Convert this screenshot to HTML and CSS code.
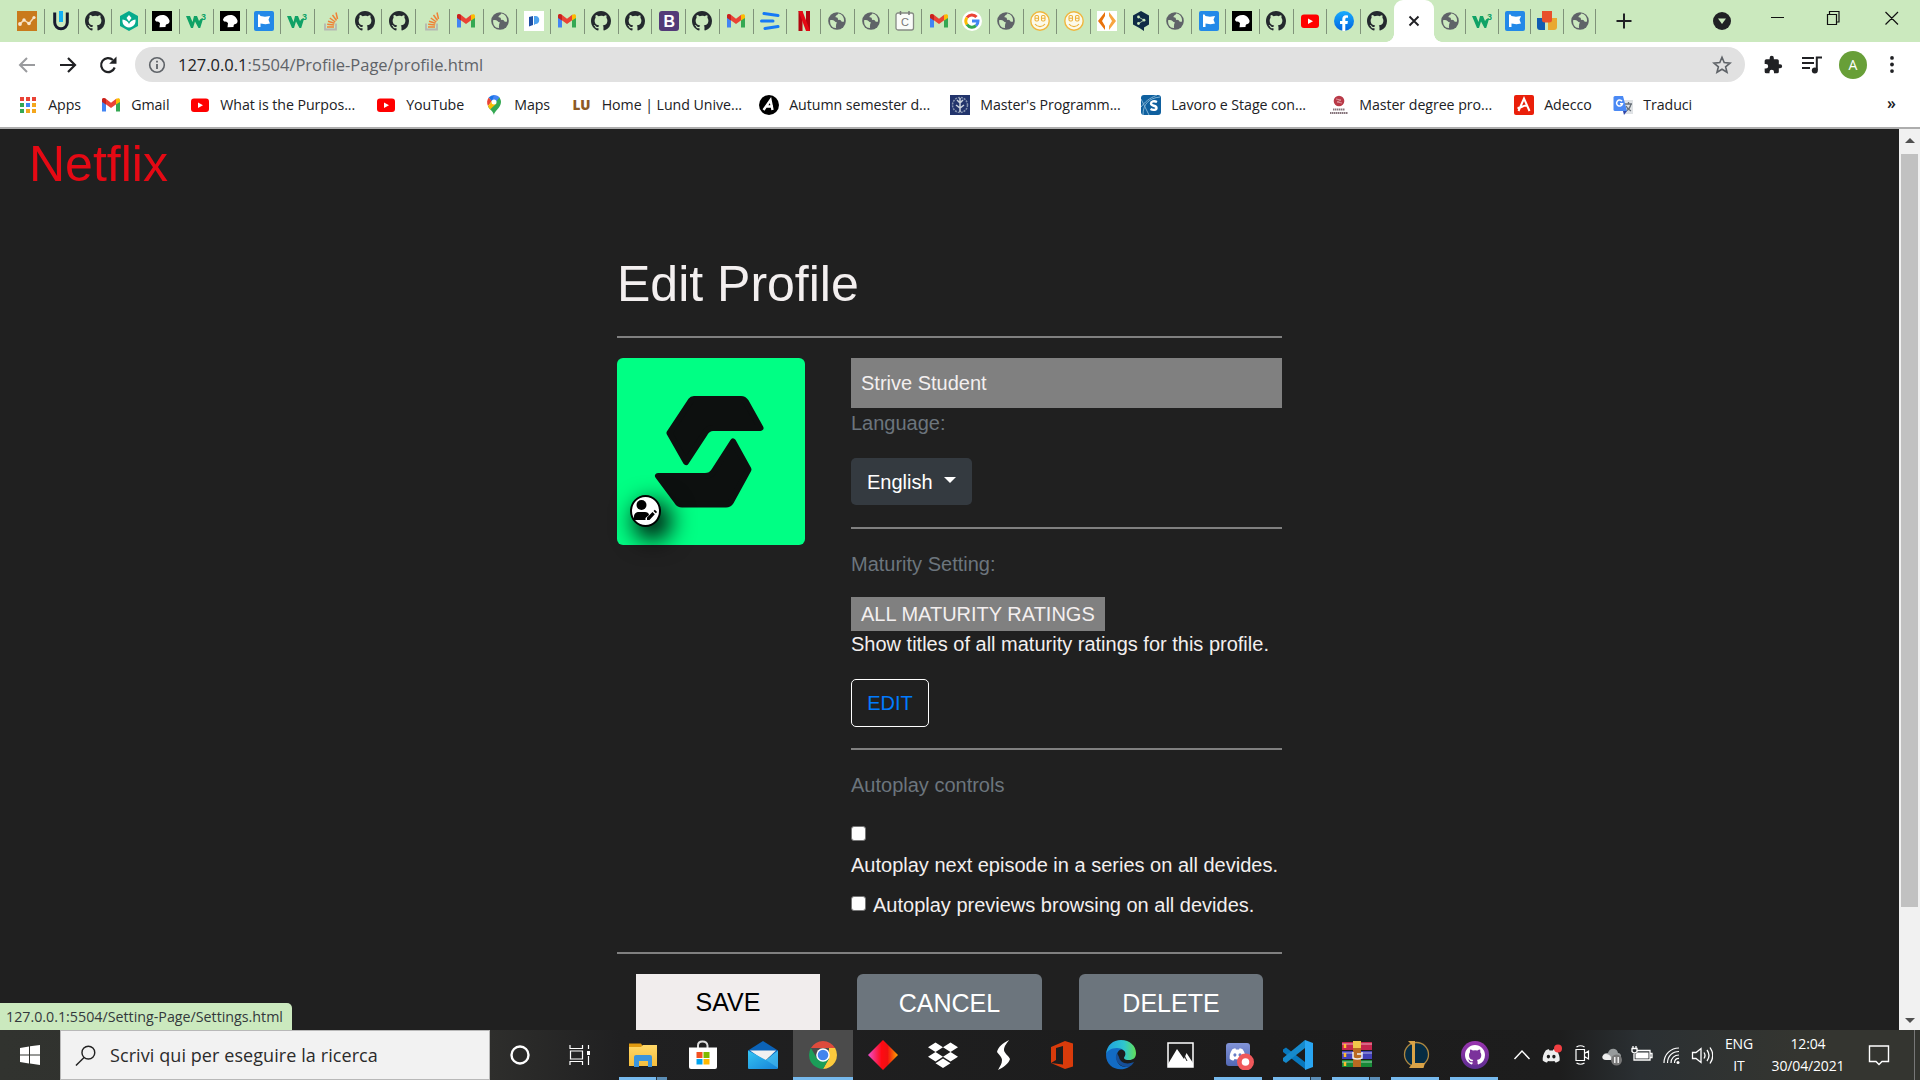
FILE: index.html
```html
<!DOCTYPE html>
<html lang="en">
<head>
<meta charset="utf-8">
<title>Edit Profile</title>
<link rel="stylesheet" href="styles.css">
</head>
<body>
<svg class="sprite" aria-hidden="true">
  <defs>
    <linearGradient id="g-fb" x2="0" y2="1"><stop stop-color="#18acfe"/><stop offset="1" stop-color="#0163e0"/></linearGradient>
    <linearGradient id="g-mail" x2="1" y2="1"><stop stop-color="#35c4f2"/><stop offset="1" stop-color="#1683d8"/></linearGradient>
    <linearGradient id="g-dia"><stop stop-color="#f04fd0"/><stop offset=".45" stop-color="#ff0a14"/><stop offset=".65" stop-color="#f01010"/><stop offset="1" stop-color="#ffa800"/></linearGradient>
    <linearGradient id="g-edge"><stop stop-color="#1f9ee0"/><stop offset=".6" stop-color="#2fc6cf"/><stop offset="1" stop-color="#62df58"/></linearGradient>
    <linearGradient id="g-folder" x2="0" y2="1"><stop stop-color="#ffd868"/><stop offset="1" stop-color="#f5bd3c"/></linearGradient>
    <linearGradient id="g-gh" x2="0" y2="1"><stop stop-color="#9a35b0"/><stop offset="1" stop-color="#5d2d91"/></linearGradient>
    <linearGradient id="g-disc" x2="0" y2="1"><stop stop-color="#8294d8"/><stop offset="1" stop-color="#5268b4"/></linearGradient>
  </defs>
  <symbol id="chart" viewBox="0 0 20 20"><path fill="#c97a1c" d="M0 0h20v20H0z"/><path d="M3 13l4-4 5 3.500 5-6" fill="none" stroke="#f6d9b4" stroke-width="1.500"/><g fill="#f6e6d0"><circle cx="3" cy="13" r="1.900"/><circle cx="7" cy="9" r="1.700"/><circle cx="12" cy="12.500" r="1.800"/><circle cx="17" cy="6.500" r="1.600"/></g></symbol>
  <symbol id="udacity" viewBox="0 0 20 20"><path d="M3.700 1.500v10a6.300 6.300 0 0 0 12.600 0v-10" fill="none" stroke="#171a2f" stroke-width="3"/><path d="M10 0v11" stroke="#12b0f5" stroke-width="4"/></symbol>
  <symbol id="github" viewBox="0 0 16 16"><path d="M8 0C3.580 0 0 3.580 0 8c0 3.540 2.290 6.530 5.470 7.590.4.070.55-.17.55-.38 0-.19-.01-.82-.01-1.490-2.010.37-2.530-.49-2.690-.94-.09-.23-.48-.94-.82-1.130-.28-.15-.68-.52-.01-.53.63-.01 1.080.58 1.230.82.72 1.210 1.870.87 2.330.66.07-.52.28-.87.51-1.070-1.780-.2-3.640-.89-3.640-3.950 0-.87.31-1.590.82-2.150-.08-.2-.36-1.020.08-2.120 0 0 .67-.21 2.200.82A7.700 7.700 0 0 1 8 3.870c.68 0 1.360.09 2 .27 1.530-1.040 2.200-.82 2.200-.82.44 1.100.16 1.920.08 2.120.51.56.82 1.270.82 2.150 0 3.070-1.870 3.750-3.650 3.950.29.25.54.73.54 1.480 0 1.070-.01 1.930-.01 2.200 0 .21.15.46.55.38A8.010 8.010 0 0 0 16 8c0-4.420-3.580-8-8-8z"/></symbol>
  <symbol id="hex" viewBox="0 0 20 20"><path fill="#06ab8c" d="M10 0l9 5v10l-9 5-9-5V5z"/><path fill="#fff" d="M10 16.500c-5-.5-7-4-6.500-8 3 .2 5.500 2 6.500 4.500 1-2.500 3.500-4.300 6.500-4.500.5 4-1.500 7.500-6.500 8z"/><path fill="#fff" d="M10 4l2.500 3L10 10.500 7.500 7z"/></symbol>
  <symbol id="head" viewBox="0 0 20 20"><path fill="#000" d="M0 0h20v20H0z"/><path fill="#fff" d="M3 8.500C4 5.500 7 4 10.500 4c4 0 6 2.500 7 5.500.3 1.500-.5 3-2 3.500-1.500.2-2 1-2 3l-6 .2.500-4.200-2-1.500c-1.500.5-3-.5-3-2z"/></symbol>
  <symbol id="w3" viewBox="0 0 20 20"><path d="M0 5h4l2.500 6L8 5h3l2 5 1.500-2H17l-2.800 9h-1.700L9 10.500 7 17H5z" fill="#10a266"/><text x="15" y="9" class="t-w3">3</text></symbol>
  <symbol id="flag" viewBox="0 0 20 20"><rect width="20" height="20" rx="2" fill="#2389e8"/><path fill="#fff" d="M4 3.500h1.500l1 1.500 4.500.8 5-.8-1.500 3.800 1.500 3.700-4.500.7-5-.7V16H4z"/></symbol>
  <symbol id="stack" viewBox="0 0 20 20"><path d="M4 12.500V18.500h11V12.500" fill="none" stroke="#b5b8b2" stroke-width="1.800"/><path d="M6 16h7M6.200 13.200l7 .9M7 10.200l6.500 2M8.800 7l5.500 4M11.500 4l4 5.500M15 1.500l1.500 6.500" stroke="#ef8236" stroke-width="1.500"/></symbol>
  <symbol id="gmail" viewBox="0 0 20 20"><path fill="#4285f4" d="M1 5v11.500h4V9z"/><path fill="#34a853" d="M15 9v7.500h4V5z"/><path fill="#ea4335" d="M1 5c0-2 2-2.500 3.500-1.500L10 7.700l5.500-4.200V9L10 13 4.500 9z"/><path fill="#c5221f" d="M1 5c0-2 2-2.500 4-1v5.500L1 7z"/><path fill="#fbbc04" d="M15 4c2-1.500 4-1 4 1v2l-4 2.500z"/></symbol>
  <symbol id="globe" viewBox="0 0 20 20"><circle cx="10" cy="10" r="8.800" fill="#5f6368"/><path fill="#cbe9be" d="M3.200 9c2.500 0 4 .2 5.300 2 1.500 0 2 1 .6 1.700.3 1.600-.5 2.500 0 4.300C5.500 17.300 2.500 14 3.200 9zM11 2.600c.3 1.500-2 1.200-2.600 3.500 1 .7 2.600 0 2.600 2.700 2 .2 2.700.2 3.500 1.700 1.200.5 2 .2 2.500 0C17.500 6.500 15 3 11 2.600z"/></symbol>
  <symbol id="pp" viewBox="0 0 20 20"><path fill="#fff" d="M0 0h20v20H0z"/><path fill="#1e50a5" d="M5 6l4-1v9l-4 1.500z"/><path fill="#4fa3ef" d="M10 5h1.500c5 0 5 8 0 8L10 14z"/></symbol>
  <symbol id="boot" viewBox="0 0 20 20"><rect width="20" height="20" rx="3" fill="#533b78"/><text x="4.500" y="15.700" class="t-b">B</text></symbol>
  <symbol id="lines" viewBox="0 0 20 20"><path d="M4 2.500l14 2M1.500 10H13M5 17.500l13-2" stroke="#1579f5" stroke-width="3" stroke-linecap="round"/></symbol>
  <symbol id="netflix" viewBox="0 0 20 20"><path fill="#b1060f" d="M4.500 0h4v20h-4zM12 0h4v20h-4z"/><path fill="#e50914" d="M4.500 0h4L16 20h-4z"/></symbol>
  <symbol id="cal" viewBox="0 0 20 20"><rect x="1" y="2" width="17.500" height="17" rx="2" fill="#fafcf9" stroke="#858a83" stroke-width="1.300"/><path d="M5.500 0v4M14 0v4" stroke="#777" stroke-width="1.500"/><text x="6" y="15" class="t-c">C</text></symbol>
  <symbol id="google" viewBox="0 0 20 20"><circle cx="10" cy="10" r="10" fill="#fff"/><g fill="none" stroke-width="3"><path d="M5 6.500A6 6 0 0 1 14.500 6" stroke="#ea4335"/><path d="M5 6.500a6 6 0 0 0 0 7" stroke="#fbbc05"/><path d="M5 13.500a6 6 0 0 0 9 1.200" stroke="#34a853"/><path d="M14 14.700a6 6 0 0 0 2-4.700h-6" stroke="#4285f4"/></g></symbol>
  <symbol id="smile" viewBox="0 0 20 20"><circle cx="10" cy="10" r="9.200" fill="#fcfae9" stroke="#f0b63e" stroke-width="1.400"/><g fill="none" stroke="#edb13a" stroke-width="1.100"><rect x="5" y="4.500" width="3.500" height="5.500" rx="1.200"/><rect x="11.500" y="4.500" width="3.500" height="5.500" rx="1.200"/><path d="M5 7.300h3.500M11.500 7.300H15M5 13c2.500 3.500 7.500 3.500 10 0"/></g></symbol>
  <symbol id="brackets" viewBox="0 0 20 20"><path fill="#fff" d="M0 0h20v20H0z"/><path fill="#e8720c" d="M8 1v4l-3 5 3 5v4l-7-9z"/><path fill="#f7a540" d="M12 1v4l3 5-3 5v4l7-9z"/></symbol>
  <symbol id="deepl" viewBox="0 0 20 20"><path fill="#0f2b46" d="M10 0l8 4.500v9L13 16.500V20l-4.500-3L2 13.500v-9z"/><g fill="#cbe9be"><circle cx="7.500" cy="6" r="1.400"/><circle cx="13" cy="9.200" r="1.400"/><circle cx="7.500" cy="12.500" r="1.400"/></g><path d="M7.500 6l5.500 3.200-5.500 3.300" fill="none" stroke="#cbe9be" stroke-width=".8"/></symbol>
  <symbol id="youtube" viewBox="0 0 20 20"><rect x="1" y="3.500" width="18" height="13.500" rx="3" fill="#f00"/><path fill="#fff" d="M8 7.500v5.500l5-2.700z"/></symbol>
  <symbol id="facebook" viewBox="0 0 20 20"><circle cx="10" cy="10" r="10" fill="url(#g-fb)"/><path fill="#fff" d="M8.300 20v-7H6v-3h2.300V8c0-2.500 1.500-3.800 3.700-3.800l2 .2v2.400h-1.200c-1.100 0-1.500.7-1.500 1.400V10h2.600l-.4 3h-2.200v7z"/></symbol>
  <symbol id="jam" viewBox="0 0 20 20"><path fill="#115cb2" d="M0 7h8v12H3q-3 0-3-3z"/><path fill="#e8a930" d="M11 7h9v9q0 3-3 3h-6z"/><path fill="#e8502c" d="M5 0h10v9q0 2.500-3 2.500H8q-3 0-3-2.500z"/></symbol>
  <symbol id="discord" viewBox="0 0 20 16"><path d="M4 1.500C6 .5 7 .5 7.500.4l.7 1.300h3.600L12.500.4C13 .5 14 .5 16 1.500c2.500 3.500 3.500 7 3.200 11-2 1.700-3.500 2-4.700 2.300l-1-1.800c-2 .6-5 .6-7 0l-1 1.800C4.300 14.500 2.800 14.200.8 12.500.5 8.500 1.500 5 4 1.500zM7 6.300c-2.400 0-2.400 4 0 4s2.300-4 0-4zm6 0c-2.400 0-2.400 4 0 4s2.300-4 0-4z" fill-rule="evenodd"/></symbol>
</svg>

<header class="browser">
  <div class="tabs">
    <div class="tab"><svg><use href="#chart"/></svg></div>
    <div class="tab"><svg><use href="#udacity"/></svg></div>
    <div class="tab"><svg><use href="#github"/></svg></div>
    <div class="tab"><svg><use href="#hex"/></svg></div>
    <div class="tab"><svg><use href="#head"/></svg></div>
    <div class="tab"><svg><use href="#w3"/></svg></div>
    <div class="tab"><svg><use href="#head"/></svg></div>
    <div class="tab"><svg><use href="#flag"/></svg></div>
    <div class="tab"><svg><use href="#w3"/></svg></div>
    <div class="tab"><svg><use href="#stack"/></svg></div>
    <div class="tab"><svg><use href="#github"/></svg></div>
    <div class="tab"><svg><use href="#github"/></svg></div>
    <div class="tab"><svg><use href="#stack"/></svg></div>
    <div class="tab"><svg><use href="#gmail"/></svg></div>
    <div class="tab"><svg><use href="#globe"/></svg></div>
    <div class="tab"><svg><use href="#pp"/></svg></div>
    <div class="tab"><svg><use href="#gmail"/></svg></div>
    <div class="tab"><svg><use href="#github"/></svg></div>
    <div class="tab"><svg><use href="#github"/></svg></div>
    <div class="tab"><svg><use href="#boot"/></svg></div>
    <div class="tab"><svg><use href="#github"/></svg></div>
    <div class="tab"><svg><use href="#gmail"/></svg></div>
    <div class="tab"><svg><use href="#lines"/></svg></div>
    <div class="tab"><svg><use href="#netflix"/></svg></div>
    <div class="tab"><svg><use href="#globe"/></svg></div>
    <div class="tab"><svg><use href="#globe"/></svg></div>
    <div class="tab"><svg><use href="#cal"/></svg></div>
    <div class="tab"><svg><use href="#gmail"/></svg></div>
    <div class="tab"><svg><use href="#google"/></svg></div>
    <div class="tab"><svg><use href="#globe"/></svg></div>
    <div class="tab"><svg><use href="#smile"/></svg></div>
    <div class="tab"><svg><use href="#smile"/></svg></div>
    <div class="tab"><svg><use href="#brackets"/></svg></div>
    <div class="tab"><svg><use href="#deepl"/></svg></div>
    <div class="tab"><svg><use href="#globe"/></svg></div>
    <div class="tab"><svg><use href="#flag"/></svg></div>
    <div class="tab"><svg><use href="#head"/></svg></div>
    <div class="tab"><svg><use href="#github"/></svg></div>
    <div class="tab"><svg><use href="#youtube"/></svg></div>
    <div class="tab"><svg><use href="#facebook"/></svg></div>
    <div class="tab tab-last"><svg><use href="#github"/></svg></div>
    <div class="tab-active"><svg viewBox="0 0 12 12"><path d="M1.500 1.500l9 9M10.500 1.500l-9 9" stroke="#202124" stroke-width="1.900"/></svg></div>
    <div class="tab tab-after"><svg><use href="#globe"/></svg></div>
    <div class="tab tab-after"><svg><use href="#w3"/></svg></div>
    <div class="tab tab-after"><svg><use href="#flag"/></svg></div>
    <div class="tab tab-after"><svg><use href="#jam"/></svg></div>
    <div class="tab tab-after"><svg><use href="#globe"/></svg></div>
    <svg class="new-tab" viewBox="0 0 16 16"><path d="M8 .5v15M.5 8h15" stroke="#202124" stroke-width="2"/></svg>
    <svg class="tab-search" viewBox="0 0 18 18"><circle cx="9" cy="9" r="9" fill="#202124"/><path d="M5 6.500h8l-4 5.500z" fill="#cbe9be"/></svg>
    <svg class="window-buttons" viewBox="0 0 128 16"><g fill="none" stroke="#111" stroke-width="1.200"><path d="M0 7.500h13M56.500 4.500h9v10h-9zM58.500 4V1.500h9.500V12h-2.500M114.500 2l12.500 12.500M127 2l-12.500 12.500"/></g></svg>
  </div>

  <div class="toolbar">
    <div class="nav">
      <svg viewBox="0 0 18 18"><path d="M17 9H2M9 2L2 9l7 7" fill="none" stroke="#9a9b9e" stroke-width="2"/></svg>
      <svg viewBox="0 0 18 18"><path d="M1 9h15M9 2l7 7-7 7" fill="none" stroke="#202124" stroke-width="2.200"/></svg>
      <svg viewBox="0 0 18 18"><path d="M15.700 11.500A7 7 0 1 1 14 4" fill="none" stroke="#202124" stroke-width="2.200"/><path d="M17.500.5v7.300h-7.300z" fill="#202124"/></svg>
    </div>
    <div class="omnibox">
      <svg class="info" viewBox="0 0 18 18"><circle cx="9" cy="9" r="7.300" fill="none" stroke="#5f6368" stroke-width="1.600"/><path d="M9 8v5M9 4.800v1.800" stroke="#5f6368" stroke-width="1.800"/></svg>
      <span class="url"><b>127.0.0.1</b>:5504/Profile-Page/profile.html</span>
      <svg class="star" viewBox="0 0 20 20"><path d="M10 2.300l2.200 5.300 5.800.5-4.400 3.700 1.400 5.500-5-3-5 3 1.400-5.500L2 8.100l5.800-.5z" fill="none" stroke="#5f6368" stroke-width="1.600"/></svg>
    </div>
    <div class="tools">
      <svg class="puzzle" viewBox="0 0 24 24"><path d="M20.500 11H19V7a2 2 0 0 0-2-2h-4V3.500a2.500 2.500 0 0 0-5 0V5H4a2 2 0 0 0-2 2v3.800h1.500a2.700 2.700 0 0 1 0 5.400H2V20a2 2 0 0 0 2 2h3.800v-1.500a2.700 2.700 0 0 1 5.400 0V22H17a2 2 0 0 0 2-2v-4h1.500a2.500 2.500 0 0 0 0-5z" fill="#202124"/></svg>
      <svg class="music" viewBox="0 0 20 18"><path d="M0 2h12M0 7h12M0 12h8M14.800 14V1.500H20" fill="none" stroke="#202124" stroke-width="2"/><circle cx="12.800" cy="14.500" r="3" fill="#202124"/></svg>
      <span class="account">A</span>
      <svg class="dots" viewBox="0 0 4 18"><g fill="#202124"><circle cx="2" cy="2" r="2"/><circle cx="2" cy="9" r="2"/><circle cx="2" cy="16" r="2"/></g></svg>
    </div>
  </div>

  <div class="bookmarks">
    <a class="bm bm-apps"><svg viewBox="0 0 20 20"><g fill="#ea4335"><path d="M2 2h4v4H2zM8 2h4v4H8zM14 2h4v4h-4z"/></g><path fill="#34a853" d="M2 8h4v4H2zM2 14h4v4H2z"/><path fill="#4285f4" d="M8 8h4v4H8z"/><path fill="#f4a71d" d="M14 8h4v4h-4zM8 14h4v4H8zM14 14h4v4h-4z"/></svg><span>Apps</span></a>
    <a class="bm bm-gmail"><svg><use href="#gmail"/></svg><span>Gmail</span></a>
    <a class="bm bm-purpose"><svg><use href="#youtube"/></svg><span>What is the Purpos...</span></a>
    <a class="bm bm-youtube"><svg><use href="#youtube"/></svg><span>YouTube</span></a>
    <a class="bm bm-maps"><svg viewBox="0 0 20 20"><path fill="#34a853" d="M10 20c0-4 7-7 7-13 0-2-1-4-2-5L4 11.500C6 15 9 16 10 20z"/><path fill="#4285f4" d="M10 0c2.500 0 4.500 1 5.500 2.500L10 9 6 4z"/><path fill="#ea4335" d="M4.700 2.500L8 6l-4 5C2.500 8 3 5 4.700 2.500z"/><path fill="#fbbc04" d="M4 11l4-5 4.500 2.500L6 14.500z"/><path fill="#1a73e8" d="M4.700 2.500A7 7 0 0 1 10 0L8 6z"/><circle cx="10" cy="7" r="2.500" fill="#fff"/></svg><span>Maps</span></a>
    <a class="bm bm-lund"><b class="lu">LU</b><span>Home | Lund Unive...</span></a>
    <a class="bm bm-autumn"><svg viewBox="0 0 20 20"><circle cx="10" cy="10" r="10"/><path d="M4.500 15L11.500 5l2 10M7 11.500h7" fill="none" stroke="#fff" stroke-width="2.400"/></svg><span>Autumn semester d...</span></a>
    <a class="bm bm-masters"><svg viewBox="0 0 20 20"><path fill="#22346c" d="M0 0h20v20H0z"/><circle cx="10" cy="10" r="7.500" fill="none" stroke="#8492ae" stroke-width="1.500" stroke-dasharray="2 1"/><path d="M10 3v14M7 5l3 3 3-3M6 10l4 3 4-3" fill="none" stroke="#cbd3dc" stroke-width="1.500"/></svg><span>Master's Programm...</span></a>
    <a class="bm bm-lavoro"><svg viewBox="0 0 20 20"><rect width="20" height="20" rx="3" fill="#0f609f"/><path d="M2 20C2 9 8 3 19 2M0 4l8 16M0 12C6 4 12 2 16 0" fill="none" stroke="#82b3d4"/><path d="M16 7c-3-1.500-6-.5-6 1.500 0 3 5.500 1.500 5.500 4.500 0 2-3.500 2.500-6 1" fill="none" stroke="#fff" stroke-width="2.400"/></svg><span>Lavoro e Stage con...</span></a>
    <a class="bm bm-degree"><svg viewBox="0 0 20 20"><circle cx="10" cy="6" r="5.300" fill="#b93a48"/><path d="M7 4l5 1-4 2 5 1" fill="none" stroke="#dd929a"/><path d="M4 14.500h12M1 18h18" stroke="#85737a" stroke-width="1.800" stroke-dasharray="1.500 .5"/></svg><span>Master degree pro...</span></a>
    <a class="bm bm-adecco"><svg viewBox="0 0 20 20"><rect width="20" height="20" rx="2" fill="#ea1f0a"/><path d="M4.500 16L10 3.500 15.500 16M3.500 13c4 0 5-2.500 9-2.500" fill="none" stroke="#fff" stroke-width="2"/></svg><span>Adecco</span></a>
    <a class="bm bm-traduci"><svg viewBox="0 0 20 20"><path fill="#dfe2e5" d="M8 5h12v14h-9z"/><path d="M12 9h7M15.500 7v2M18 9c-1 4-3 6-5 7M13 11c1 2 3 4 5 5" fill="none" stroke="#687078" stroke-width="1.300"/><path fill="#4a89f4" d="M2 1h8l4 15H2q-1.500 0-1.500-1.500v-12Q.5 1 2 1z"/><path fill="#3046a8" d="M10 16h4l-3 4z"/><path d="M9 6.300a3 3 0 1 0 .5 2.500H7" fill="none" stroke="#fff" stroke-width="1.500"/></svg><span>Traduci</span></a>
    <span class="more">»</span>
  </div>
</header>

<div class="viewport">
  <main class="page">
    <div class="brand">Netflix</div>
    <section class="profile">
      <h1>Edit Profile</h1>
      <hr>
      <div class="columns">
        <div class="avatar">
          <svg class="avatar-logo" viewBox="0 0 188 187"><g fill="#0d100f" stroke="#0d100f" stroke-width="6" stroke-linejoin="round"><path d="M74 42.500Q75 41 77 41h47q3 0 5 3l14.500 26H96q-5 0-8 5L69 104 52.500 75z"/><path d="M116 83.500L131.500 111.500 114 143.500q-2 3-5 3H65q-3 0-5-3L41 118h47q6 0 9-5z"/></g></svg>
          <span class="avatar-edit"><svg viewBox="0 0 27 27"><circle cx="9.500" cy="8" r="5"/><path d="M2 23v-3c0-3.500 2-5 5-5h6c2 0 4 1 4 3l-3.500 3V23zM15 23v-2.500l5.500-5.500 2.300 2.300L17.500 23zM21.500 14l1.300-1.300 2.300 2.300-1.300 1.300z"/></svg></span>
        </div>
        <div class="settings">
          <div class="name">Strive Student</div>
          <p class="label">Language:</p>
          <button class="language">English<i class="caret"></i></button>
          <hr>
          <p class="label">Maturity Setting:</p>
          <span class="rating">ALL MATURITY RATINGS</span>
          <p class="text">Show titles of all maturity ratings for this profile.</p>
          <a class="edit">EDIT</a>
          <hr>
          <p class="label">Autoplay controls</p>
          <i class="check"></i>
          <p class="text text-next">Autoplay next episode in a series on all devides.</p>
          <div class="option"><i class="check"></i><p class="text">Autoplay previews browsing on all devides.</p></div>
        </div>
      </div>
      <hr class="end">
      <div class="actions">
        <button class="save">SAVE</button>
        <button>CANCEL</button>
        <button>DELETE</button>
      </div>
    </section>
  </main>
  <div class="scrollbar"><i class="arrow-up"></i><i class="thumb"></i><i class="arrow-down"></i></div>
  <div class="status">127.0.0.1:5504/Setting-Page/Settings.html</div>
</div>

<footer class="taskbar">
  <div class="start"><svg viewBox="0 0 20 20"><path fill="#fff" d="M0 3l9-1.500v8H0zM10 1.300L20 0v9.500H10zM0 10.500h9v8L0 17zM10 10.500h10V20l-10-1.400z"/></svg></div>
  <div class="search"><svg viewBox="0 0 22 22"><circle cx="14" cy="8" r="6.700" fill="none" stroke="#222" stroke-width="1.500"/><path d="M9.500 13L1 21.500" stroke="#222" stroke-width="1.500"/></svg>Scrivi qui per eseguire la ricerca</div>
  <div class="task"><svg viewBox="0 0 30 30"><circle cx="15" cy="15" r="8.500" fill="none" stroke="#fff" stroke-width="2.400"/></svg></div>
  <div class="task task-view"><svg viewBox="0 0 30 30"><path d="M5 5v3.500h12.500V5M5.500 11h12v8h-12zM5 25v-3.500h12.500V25M23.500 5v4M23.500 16v9" fill="none" stroke="#fff" stroke-width="1.200"/><path d="M22 11h3v4h-3z" fill="#fff"/></svg></div>
  <div class="task open-many"><svg viewBox="0 0 30 30"><path fill="#e09a10" d="M1 3.500h12l2 3v4H1z"/><path fill="url(#g-folder)" d="M1 7h12l2-2h14v21H1z"/><path fill="#3b94dc" d="M6 17q0-2 2-2h14q2 0 2 2v10h-4v-6h-9v6H6z"/></svg></div>
  <div class="task"><svg viewBox="0 0 30 30"><path d="M10 8V5.500q0-4 4.500-4t5 4V8" fill="none" stroke="#ddd" stroke-width="2"/><path fill="#fff" d="M1 7.500h28V27q0 2-2 2H3q-2 0-2-2z"/><path fill="#f25022" d="M8.500 12h6v6h-6z"/><path fill="#7fba00" d="M15.500 12h6v6h-6z"/><path fill="#00a4ef" d="M8.500 19h6v5.500h-6z"/><path fill="#ffb900" d="M15.500 19h6v5.500h-6z"/></svg></div>
  <div class="task"><svg viewBox="0 0 30 30"><path fill="#0b63b8" d="M0 10.500L15 1l15 9.500v6H0z"/><path fill="#f1f1f1" d="M2 10.500h26L17 21z"/><path fill="url(#g-mail)" d="M0 10.500L18 20l12-9.500V28q0 1-1 1H1q-1 0-1-1z"/><path fill="#6bdcff" opacity=".35" d="M30 10.500V28L18 20z"/></svg></div>
  <div class="task current"><svg viewBox="0 0 30 30"><path fill="#de4b3c" d="M2.900 8a14 14 0 0 1 24.200 0H15z"/><path fill="#fdca3d" d="M27.100 8A14 14 0 0 1 15 29l6-10.500V8z"/><path fill="#1b9e58" d="M2.900 8A14 14 0 0 0 15 29l6-10.500H9z"/><circle cx="15" cy="15" r="6.800" fill="#fff"/><circle cx="15" cy="15" r="5.300" fill="#4385ee"/></svg></div>
  <div class="task"><svg viewBox="0 0 30 30"><path fill="url(#g-dia)" d="M15 0l15 15-15 15L0 15z"/></svg></div>
  <div class="task"><svg viewBox="0 0 30 30"><path fill="#fff" d="M7.500 2.500L15 7.200 7.500 12 0 7.200zM22.500 2.500L30 7.200 22.500 12 15 7.200zM7.500 12L15 16.800l-7.500 4.700L0 16.800zM22.500 12l7.500 4.800-7.500 4.700-7.500-4.700zM15 18.500l7.500 4.700L15 28l-7.500-4.800z"/></svg></div>
  <div class="task narrow"><svg viewBox="0 0 30 30"><path fill="#fff" d="M21 0C15 3 10 7 9 12c2 3 5 5 5 8 0 4-2 6-4 10 5-2 11-7 12-11-2-4-6-6-6-9 0-4 3-7 5-10z"/></svg></div>
  <div class="task narrow"><svg viewBox="0 0 30 30"><path fill="#d93b0b" fill-rule="evenodd" d="M4 7l14-6 8 2.500v23L18 29 4 23l12 1.500V6L9 8v12l-5 3z"/></svg></div>
  <div class="task narrow"><svg viewBox="0 0 30 30"><path fill="#126bc4" d="M0 15c0 12 13 18 23 12-9 1-14-5-12-13 1-4 5-6 7-3-2-9-18-6-18 4z"/><path fill="url(#g-edge)" d="M0 14C1 5 7 0 15 0c9 0 15 6 15 13 0 5-3 7-7 7-5 0-6-2-4-4 2-5-3-8-8-8C5 8 1 11 0 14z"/><path fill="#154f99" d="M11 13c-4 8 4 15 12 14 2-1 4-3 5-5-7 3-14 1-15-5z"/></svg></div>
  <div class="task narrow"><svg viewBox="0 0 30 30"><path fill="none" stroke="#fff" stroke-width="1.500" d="M3 3h25v24H3z"/><path fill="#fff" d="M3 24l9-15 7 10 2.500-6L28 23v4H3z"/><path d="M18 13l4 8" stroke="#1d1d1d"/></svg></div>
  <div class="task narrow open"><svg viewBox="0 0 30 30"><rect x="2" y="3" width="24" height="23" rx="3" fill="url(#g-disc)"/><g transform="translate(5 8) scale(.85)" fill="#fff"><path d="M4 1.500C6 .5 7 .5 7.500.4l.7 1.300h3.600L12.500.4C13 .5 14 .5 16 1.500c2.500 3.500 3.500 7 3.200 11-2 1.700-3.500 2-4.700 2.300l-1-1.800c-2 .6-5 .6-7 0l-1 1.800C4.300 14.500 2.800 14.200.8 12.500.5 8.500 1.500 5 4 1.500zM7 6.300c-2.400 0-2.400 4 0 4s2.300-4 0-4zm6 0c-2.400 0-2.400 4 0 4s2.300-4 0-4z" fill-rule="evenodd"/></g><circle cx="21.500" cy="22" r="8.500" fill="#f0585b"/><circle cx="21.500" cy="22" r="3.800" fill="#fff"/></svg></div>
  <div class="task narrow open-many"><svg viewBox="0 0 30 30"><path fill="#0878bd" d="M0 9.500l3-2L22 22v7L0 12z"/><path fill="#168acc" d="M0 21l3 2L22 8V0L0 18z"/><path fill="#29a5f1" d="M22 0l8 3v24l-8 3z"/></svg></div>
  <div class="task narrow open-many"><svg viewBox="0 0 30 30"><path fill="#c3264e" d="M0 2h30v8H0z"/><path fill="#4341b8" d="M0 11h30v8H0z"/><path fill="#188a38" d="M0 20h30v7H0z"/><path d="M0 4h30M0 13h30M0 22h30" stroke="#fff" stroke-opacity=".3" stroke-width="2"/><path fill="#b96a22" d="M11 1h8v26h-8z"/><path fill="#f0c64a" d="M11 1h8v7h-8z"/><path fill="none" stroke="#eee" stroke-width="1.500" d="M11 12v6q4 2 9 0v-6M15 14h5"/><path d="M3 4v4M3 13v4M3 22v4" stroke="#ffbc30" stroke-width="2.500"/></svg></div>
  <div class="task narrow open"><svg viewBox="0 0 30 30"><circle cx="15.500" cy="14.500" r="12" fill="#062c43" stroke="#ad8741" stroke-width="1.300"/><path fill="#d9a347" d="M7 1h7v22h10l-1.500 5H8l3-4V5z"/></svg></div>
  <div class="task narrow open"><svg viewBox="0 0 30 30"><circle cx="15" cy="15" r="14" fill="url(#g-gh)"/><g transform="translate(5 5) scale(1.250)"><path fill="#fff" d="M8 0C3.580 0 0 3.580 0 8c0 3.540 2.290 6.530 5.470 7.590L6.020 15.200h4L10.570 15.590A8.010 8.010 0 0 0 16 8c0-4.420-3.580-8-8-8z"/><path fill="#7b329b" d="M6 16v-2.300c-2 .4-2.500-.5-2.700-1-.2-.3-.5-.9-.9-1.100.8-.3 1.500.5 1.800.9.500.7 1.300.6 1.900.4.100-.4.300-.7.500-.9-1.800-.3-3.400-1.200-3.400-4 0-.9.300-1.600.8-2.200-.1-.7-.1-1.500.1-2.200.8 0 1.500.4 2.200.8a7.700 7.700 0 0 1 3.600 0c.7-.4 1.400-.8 2.200-.8.200.7.200 1.500.1 2.200.5.600.8 1.300.8 2.200 0 2.800-1.600 3.700-3.500 4 .4.400.6.900.6 1.500V16z"/></g></svg></div>
  <div class="tray">
    <svg viewBox="0 0 22 22"><path d="M3.500 15L11 7l7.500 8" fill="none" stroke="#fff" stroke-width="1.400"/></svg>
    <svg viewBox="0 0 22 22"><g transform="translate(1 5) scale(.92)" fill="#eee"><path d="M4 1.500C6 .5 7 .5 7.500.4l.7 1.300h3.600L12.500.4C13 .5 14 .5 16 1.500c2.500 3.500 3.500 7 3.200 11-2 1.700-3.500 2-4.700 2.300l-1-1.800c-2 .6-5 .6-7 0l-1 1.800C4.300 14.500 2.800 14.200.8 12.500.5 8.500 1.500 5 4 1.500zM7 6.300c-2.400 0-2.400 4 0 4s2.300-4 0-4zm6 0c-2.400 0-2.400 4 0 4s2.300-4 0-4z" fill-rule="evenodd"/></g><circle cx="17" cy="4.500" r="4" fill="#f23f42"/></svg>
    <svg viewBox="0 0 22 22"><path d="M5 5.500h8.500v11H5zM13.500 9.500L17.500 7v8l-4-2.500M5.500 3q4-2.500 8 0M5.500 19q4 2.500 8 0" fill="none" stroke="#fff" stroke-width="1.200"/></svg>
    <svg viewBox="0 0 22 22"><path fill="#979b9c" d="M7 9c1-5 9-6 10 0 4 0 4 6 0 6H5c-4 0-4-5 0-6z"/><path fill="#eee" d="M2 15c-2-3 1-5 3-5s4 1 5 3l2 3H5q-2 0-3-1z"/><circle cx="15.500" cy="16" r="5.500" fill="#777"/><path d="M13.800 13v6M17.200 13v6" stroke="#fff" stroke-width="1.300"/></svg>
    <svg viewBox="0 0 22 22"><path fill="none" stroke="#fff" stroke-width="1.300" d="M6 6.500h13v9.500H3V10M1 4.500h5v3q-2.500 3-5 0zM2 2v3M5 2v3M19.500 9.500h1.500v4h-1.500"/><path fill="#fff" d="M6 8.500h11.500v6H4.500v-4z"/></svg>
    <svg viewBox="0 0 22 22"><g fill="none" stroke="#fff" stroke-width="1.200"><path d="M3 19C3 10 10 4 18 4M6.500 19c0-7 5-11.500 11.500-11.500M10 19c0-5 3.500-8 8-8M13.500 19c0-3 2-4.700 4.500-4.700"/></g><circle cx="17" cy="18.500" r="1.500" fill="#fff"/></svg>
    <svg viewBox="0 0 22 22"><path d="M1.500 8.500H5l5-4v14l-5-4H1.500zM13 8.500q2 3 0 6M16 6q4 5.500 0 11M19 3.500q5.500 8 0 16" fill="none" stroke="#fff" stroke-width="1.300"/></svg>
  </div>
  <div class="lang">ENG<br>IT</div>
  <div class="clock">12:04<br>30/04/2021</div>
  <svg class="notice" viewBox="0 0 22 22"><path d="M1.500 2h19v15.500H14L11 20.500 8 17.500H1.500z" fill="none" stroke="#fff" stroke-width="1.400"/></svg>
  <i class="show-desktop"></i>
</footer>
</body>
</html>
```
FILE: styles.css
```css
* { box-sizing: border-box; }
body {
  margin: 0;
  width: 1920px;
  height: 1080px;
  overflow: hidden;
  display: flex;
  flex-direction: column;
  background: #202020;
  font-family: "Liberation Sans", Arial, sans-serif;
}
svg { display: block; flex: none; }
p { margin: 0; }
.sprite { position: absolute; width: 0; height: 0; }
.t-w3 { font: bold 9px "Liberation Sans", sans-serif; fill: #10a266; }
.t-b { font: bold 16px "Liberation Sans", sans-serif; fill: #fff; }
.t-c { font: 11px "Liberation Sans", sans-serif; fill: #777; }

/* Browser chrome */
.browser { height: 129px; flex: none; background: #fff; border-bottom: 2px solid #adadad; font-family: "Open Sans", "Noto Sans", sans-serif; color: #202124; }
.tabs { height: 42px; display: flex; align-items: center; padding-left: 11px; background: #cbe9be; }
.tab { width: 33.76px; height: 25px; display: flex; align-items: center; justify-content: center; border-right: 1px solid #80937a; flex: none; }
.tab svg { width: 20px; height: 20px; fill: #24292e; }
.tab-last { border: 0; width: 32.8px; }
.tab-after { width: 32.5px; }
.tab-active { position: relative; align-self: stretch; width: 40px; background: #fff; border-radius: 9px 9px 0 0; display: flex; align-items: center; justify-content: center; flex: none; }
.tab-active svg { width: 12px; height: 12px; }
.tab-active::before, .tab-active::after { content: ""; position: absolute; bottom: 0; width: 8px; height: 8px; }
.tab-active::before { left: -8px; background: radial-gradient(circle at 0 0, transparent 7.5px, #fff 8px); }
.tab-active::after { right: -8px; background: radial-gradient(circle at 100% 0, transparent 7.5px, #fff 8px); }
.new-tab { width: 16px; height: 16px; margin-left: 20px; }
.tab-search { width: 18px; height: 18px; margin-left: 81px; }
.window-buttons { width: 128px; height: 16px; margin: -6px 0 0 40px; }

.toolbar { height: 45px; display: flex; align-items: center; }
.nav { width: 135px; padding-left: 18px; display: flex; gap: 22.500px; }
.nav svg { width: 18px; height: 18px; }
.omnibox { width: 1610px; height: 35px; border-radius: 18px; background: #e1e1e1; display: flex; align-items: center; padding: 0 13px; }
.info { width: 18px; height: 18px; }
.url { flex: 1; margin: -1px 0 0 12px; font-size: 16.500px; letter-spacing: -.02px; color: #5f6368; white-space: nowrap; }
.url b { font-weight: 400; color: #202124; }
.star { width: 20px; height: 20px; }
.tools { display: flex; align-items: center; }
.puzzle { width: 20px; height: 20px; margin-left: 18px; }
.music { width: 20px; height: 18px; margin-left: 19px; }
.account { width: 28px; height: 28px; margin-left: 17px; border-radius: 50%; background: #689f38; color: #fff; font-size: 14px; line-height: 28px; text-align: center; }
.dots { width: 4px; height: 17px; margin-left: 23px; }

.bookmarks { height: 40px; display: flex; align-items: center; padding: 0 0 4px 18px; font-size: 14.200px; letter-spacing: -.050px; white-space: nowrap; }
.bm { display: flex; align-items: center; gap: 10.200px; flex: none; }
.bm span { margin-top: -2px; }
.bm svg { width: 20px; height: 20px; }
.lu { width: 20px; text-align: center; font-weight: 800; font-size: 13.500px; color: #8c5a26; }
.bm-apps { width: 83px; }
.bm-gmail { width: 89px; }
.bm-purpose { width: 186px; }
.bm-youtube { width: 108px; }
.bm-maps { width: 87.500px; }
.bm-lund { width: 187.500px; }
.bm-autumn { width: 191px; }
.bm-masters { width: 191px; }
.bm-lavoro { width: 188px; }
.bm-degree { width: 185px; }
.bm-adecco { width: 99px; }
.bm-traduci { width: 274px; }
.more { font-size: 16px; font-weight: 600; margin-top: -4px; }

/* Web page */
.viewport { position: relative; height: 901px; flex: none; display: flex; overflow: hidden; }
.page { width: 1899px; height: 901px; overflow: hidden; font-size: 20px; line-height: 30px; color: #f3efef; }
.brand { padding: 5px 0 0 29px; font-size: 50px; line-height: 60px; color: #e50914; }
.profile { width: 665px; margin: 60px 0 0 617px; }
h1 { margin: 0 0 22px; font-size: 50px; line-height: 60px; font-weight: 400; }
hr { margin: 0; height: 2px; border: 0; background: gray; }
.columns { display: flex; justify-content: space-between; padding-top: 20px; height: 614px; }
.avatar { position: relative; width: 188px; height: 187px; border-radius: 6px; background: #00ff84; }
.avatar-logo { width: 188px; height: 187px; }
.avatar-edit { position: absolute; left: 13px; top: 137px; width: 31px; height: 32px; border: 2.500px solid #000; border-radius: 50%; background: #fff; box-shadow: 7px 10px 25px 3px #000; }
.avatar-edit svg { width: 27px; height: 27px; }
.settings { width: 431px; display: flex; flex-direction: column; align-items: flex-start; }
.settings hr { width: 100%; margin: 22px 0 20px; flex: none; }
.settings .edit + hr { margin-top: 21px; }
.name { width: 100%; padding: 10px; background: gray; }
.label { color: #6c757d; margin-bottom: 20px; }
.language { width: 121px; height: 47px; border: 0; border-radius: 5px; background: #343a40; color: #fff; font: 20px "Liberation Sans", Arial, sans-serif; display: flex; align-items: center; padding: 1px 0 0 16px; }
.caret { margin: -5px 0 0 11px; border: 6px solid transparent; border-top-color: #fff; border-bottom: 0; }
.rating { margin-top: -2px; padding: 2px 10px; background: gray; }
.text { white-space: nowrap; margin-top: -2px; }
.edit { margin-top: 20px; width: 78px; height: 48px; border: 1.250px solid #fff; border-radius: 5px; color: #007bff; line-height: 46px; text-align: center; }
.check { width: 15px; height: 15px; margin-top: 6px; border: 1px solid #767676; border-radius: 3px; background: #fff; flex: none; }
.text-next { margin-top: 9px; }
.option { display: flex; gap: 7px; margin-top: 10px; }
.option .text { margin-top: 0; }
.actions { display: grid; grid-template-columns: 184px 185px 184px; gap: 37px; padding: 20px 0 0 19px; }
.actions button { height: 75px; margin: 0; border: 0; border-radius: 6px; background: #6c757d; color: #fff; font: 25px/38px "Liberation Sans", Arial, sans-serif; padding: 10px 0 27px; }
.actions .save { border-radius: 0; background: #f1eded; color: #000; padding: 9px 0 28px; }

.scrollbar { width: 21px; background: #f1f1f1; display: flex; flex-direction: column; align-items: center; }
.arrow-up, .arrow-down { border: 5px solid transparent; }
.arrow-up { border-bottom-color: #505050; border-top: 0; margin-top: 9px; }
.thumb { width: 17px; height: 753px; margin-top: 11px; background: #c1c1c1; }
.arrow-down { border-top-color: #505050; border-bottom: 0; margin-top: auto; margin-bottom: 7px; }
.status { position: absolute; left: 0; bottom: 0; width: 292px; height: 27px; padding-left: 6px; border-radius: 0 5px 0 0; background: #cbe9be; color: #33383c; font: 14.250px/27px "Open Sans", sans-serif; white-space: nowrap; }

/* Taskbar */
.taskbar { height: 50px; flex: none; display: flex; align-items: center; overflow: hidden; background: linear-gradient(90deg, #31332f 0, #2e2e2c 490px, #202021 620px, #1c1c1c 1250px, #1d1d1d 1560px, #2b3033 1640px, #343530 1800px, #343530); color: #fff; font-family: "Open Sans", "Noto Sans", sans-serif; }
.start { width: 60px; padding-left: 20px; flex: none; }
.start svg { width: 20px; height: 20px; }
.search { width: 430px; height: 50px; flex: none; display: flex; align-items: center; gap: 14px; padding-left: 14px; background: #f2f2f2; border: 1px solid #b8b8b8; color: #2b2b2b; font-size: 18px; letter-spacing: .08px; white-space: nowrap; }
.search svg { width: 21px; height: 21px; }
.task { position: relative; width: 60px; height: 50px; display: flex; align-items: center; justify-content: center; flex: none; }
.task svg { width: 30px; height: 30px; }
.task-view { width: 63px; padding-right: 3px; }
.narrow { width: 59px; }
.open::after, .open-many::after, .current::after { content: ""; position: absolute; left: 6px; width: 48px; bottom: 0; height: 3px; background: #76b9ed; }
.open-many::after { background: linear-gradient(90deg, #76b9ed 37px, #24333e 37px 38px, #5b8db5 38px); }
.narrow::after { left: 5px; }
.current { background: #4b4b4b; }
.current::after { left: 0; width: 60px; }
.tray { display: flex; gap: 8px; margin-left: 7px; }
.tray svg { width: 22px; height: 22px; }
.lang, .clock { text-align: center; font-size: 14px; line-height: 22px; letter-spacing: -.15px; flex: none; margin-top: -1px; }
.lang { width: 52px; }
.clock { width: 86px; }
.notice { width: 22px; height: 22px; margin-left: 17px; }
.show-desktop { width: 1px; height: 50px; margin-left: 24px; background: #777; }
```
